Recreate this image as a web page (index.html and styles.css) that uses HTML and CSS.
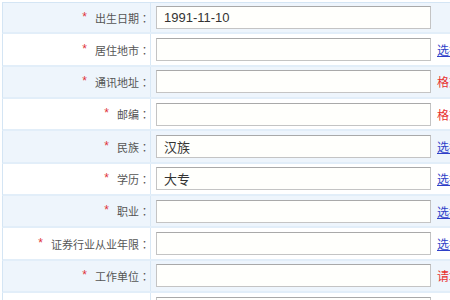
FILE: index.html
```html
<!DOCTYPE html>
<html lang="zh-CN">
<head>
<meta charset="utf-8">
<link rel="stylesheet" href="styles.css">
</head>
<body>
<div class="form">
  <div class="row alt">
    <div class="label"><span class="req">*</span>出生日期<span class="colon">：</span></div>
    <div class="field"><input class="inp" type="text" value="1991-11-10"><span class="hint"></span></div>
  </div>
  <div class="row">
    <div class="label"><span class="req">*</span>居住地市<span class="colon">：</span></div>
    <div class="field"><input class="inp" type="text" value=""><a class="link" href="#">选择</a></div>
  </div>
  <div class="row alt">
    <div class="label"><span class="req">*</span>通讯地址<span class="colon">：</span></div>
    <div class="field"><input class="inp" type="text" value=""><span class="hint">格式错误</span></div>
  </div>
  <div class="row">
    <div class="label"><span class="req">*</span>邮编<span class="colon">：</span></div>
    <div class="field"><input class="inp" type="text" value=""><span class="hint">格式错误</span></div>
  </div>
  <div class="row alt">
    <div class="label"><span class="req">*</span>民族<span class="colon">：</span></div>
    <div class="field"><input class="inp" type="text" value="汉族"><a class="link" href="#">选择</a></div>
  </div>
  <div class="row">
    <div class="label"><span class="req">*</span>学历<span class="colon">：</span></div>
    <div class="field"><input class="inp" type="text" value="大专"><a class="link" href="#">选择</a></div>
  </div>
  <div class="row alt">
    <div class="label"><span class="req">*</span>职业<span class="colon">：</span></div>
    <div class="field"><input class="inp" type="text" value=""><a class="link" href="#">选择</a></div>
  </div>
  <div class="row">
    <div class="label"><span class="req">*</span>证券行业从业年限<span class="colon">：</span></div>
    <div class="field"><input class="inp" type="text" value=""><a class="link" href="#">选择</a></div>
  </div>
  <div class="row alt">
    <div class="label"><span class="req">*</span>工作单位<span class="colon">：</span></div>
    <div class="field"><input class="inp" type="text" value=""><span class="hint">请填写</span></div>
  </div>
  <div class="row">
    <div class="label"></div>
    <div class="field"><input class="inp" type="text" value=""></div>
  </div>
</div>
</body>
</html>
```
FILE: styles.css
```css
html, body {
  margin: 0;
  padding: 0;
  background: #ffffff;
  overflow: hidden;
}
body {
  width: 450px;
  height: 300px;
  font-family: "Noto Sans CJK SC", "Liberation Sans", sans-serif;
  font-size: 11px;
  color: #555555;
}
.form {
  padding: 2px 0 0 2px;
  width: 520px;
}
.form > .row:first-child {
  border-top: 1px solid #d4e5f4;
}
.row {
  display: grid;
  grid-template-columns: 148px 1fr;
  height: 32.35px;
  box-sizing: border-box;
  border-bottom: 2px solid #e2eef9;
  border-left: 1px solid #d4e5f4;
  background: #ffffff;
}
.row.alt {
  background: #eef5fc;
}
.label {
  display: flex;
  align-items: center;
  justify-content: flex-end;
  padding-right: 0;
  border-right: 1px solid #d9e8f5;
  white-space: nowrap;
}
.colon {
  font-family: "Noto Sans CJK TC", "Noto Sans CJK SC", sans-serif;
}
.req {
  color: #e0343a;
  font-family: "Liberation Sans", sans-serif;
  font-size: 12px;
  margin-right: 8px;
  position: relative;
  top: -1px;
}
.field {
  display: flex;
  align-items: center;
  padding-left: 5px;
  gap: 6px;
}
.inp {
  box-sizing: border-box;
  width: 275px;
  height: 23px;
  margin: 0;
  padding: 0 7px;
  border: 1px solid #c4c4c4;
  border-top-color: #a9a9a9;
  background: #fffffc;
  font-family: "Liberation Sans", "Noto Sans CJK SC", sans-serif;
  font-size: 13px;
  color: #333333;
  outline: none;
}
.link {
  color: #2f3fc8;
  text-decoration: underline;
  font-size: 12px;
  white-space: nowrap;
}
.hint {
  color: #e8312f;
  font-size: 12px;
  white-space: nowrap;
}
```
